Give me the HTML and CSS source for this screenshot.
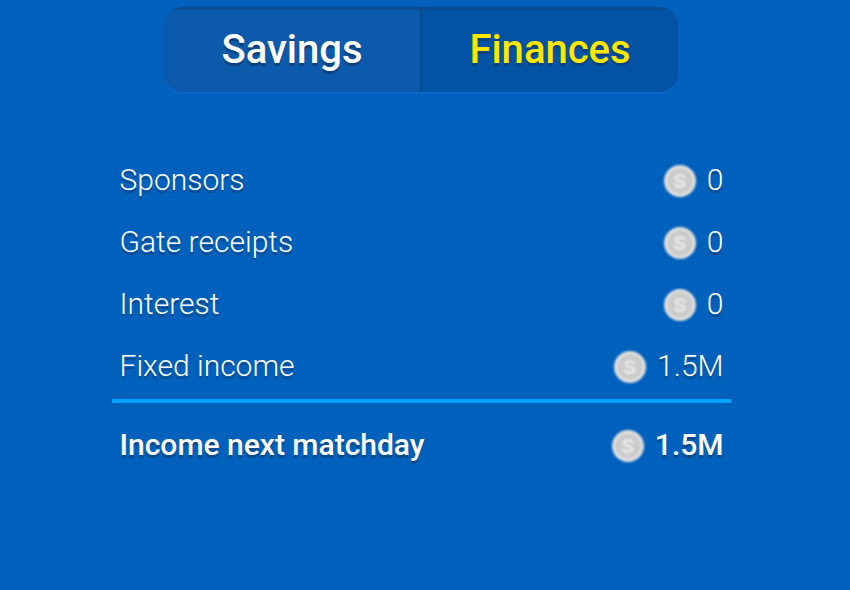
FILE: index.html
```html
<!DOCTYPE html>
<html lang="en">
<head>
<meta charset="utf-8">
<title>Finances</title>
<link rel="stylesheet" href="styles.css">
</head>
<body>
<svg class="defs" width="0" height="0" aria-hidden="true">
  <defs>
    <symbol id="coin" viewBox="0 0 32 32">
      <circle cx="16" cy="16" r="16" fill="#dedede"/>
      <circle cx="16" cy="16" r="12.500" fill="#cbcbcb"/>
      <path d="M20.500 12.300c-.8-1.200-2.500-1.900-4.500-1.900-2.300 0-4.100 1.100-4.100 2.900 0 3.800 8.300 1.700 8.300 5.500 0 1.800-1.900 2.800-4.200 2.800-2 0-3.800-.8-4.500-2.100" fill="none" stroke="#e8e8e8" stroke-width="2.800" stroke-linecap="round"/>
    </symbol>
  </defs>
</svg>
<main class="page">
  <div class="tabs">
    <div class="tab tab-savings">Savings</div>
    <div class="tab tab-finances">Finances</div>
  </div>
  <div class="rows">
    <div class="row"><span>Sponsors</span><span class="amount"><svg class="coin"><use href="#coin"/></svg>0</span></div>
    <div class="row"><span>Gate receipts</span><span class="amount"><svg class="coin"><use href="#coin"/></svg>0</span></div>
    <div class="row"><span>Interest</span><span class="amount"><svg class="coin"><use href="#coin"/></svg>0</span></div>
    <div class="row row-last"><span>Fixed income</span><span class="amount"><svg class="coin"><use href="#coin"/></svg>1.5M</span></div>
    <div class="row row-total"><span>Income next matchday</span><span class="amount"><svg class="coin"><use href="#coin"/></svg>1.5M</span></div>
  </div>
</main>
</body>
</html>
```
FILE: styles.css
```css
* { box-sizing: border-box; }
html, body { margin: 0; height: 100%; }
body {
  background: #0061bd;
  font-family: Roboto, "Liberation Sans", sans-serif;
  color: #fff;
  overflow: hidden;
}
.defs { display: block; height: 0; }
.page {
  width: 850px;
  height: 590px;
  padding-top: 7px;
  display: flex;
  flex-direction: column;
  align-items: center;
}
.tabs {
  margin-left: -8px;
  width: 516px;
  height: 87px;
  display: flex;
  border-radius: 20px;
  overflow: hidden;
  border: 1px solid #0a5cb4;
  border-top: 0;
  border-bottom: 2px solid #0868cc;
}
.tab {
  flex: 1;
  display: flex;
  align-items: center;
  justify-content: center;
  font-size: 40px;
  font-weight: 500;
  text-shadow: 0 3px 0 #0a4280;
}
.tab-savings {
  background: #0c5aac;
  border-right: 2px solid #0a4a90;
  box-shadow: inset 0 3px 0 #0a4c94;
}
.tab-finances {
  background: #0353a5;
  color: #ffe600;
  box-shadow: inset 0 3px 0 #0a4c94;
}
.rows {
  margin-top: 54px;
  margin-left: -8px;
  width: 619px;
  display: flex;
  flex-direction: column;
}
.row {
  height: 62px;
  padding: 0 7px 0 8px;
  display: flex;
  align-items: center;
  justify-content: space-between;
  font-size: 30px;
  font-weight: 300;
  text-shadow: 0 3px 0 #0a4a8c;
}
.row-last {
  height: 69px;
  padding-bottom: 3px;
  border-bottom: 4px solid #00a0ff;
}
.row-total {
  height: 82px;
  font-weight: 500;
}
.amount {
  display: flex;
  align-items: center;
  gap: 11px;
}
.coin {
  width: 32px;
  height: 32px;
  margin-top: 4px;
  filter: blur(.9px);
}
```
